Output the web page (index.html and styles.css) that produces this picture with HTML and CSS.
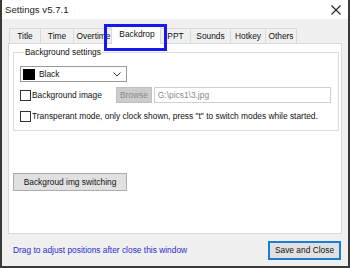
FILE: index.html
```html
<!DOCTYPE html>
<html>
<head>
<meta charset="utf-8">
<link rel="stylesheet" href="styles.css">
</head>
<body>
<div class="window">
  <div class="titlebar">
    <span class="title">Settings v5.7.1</span>
    <svg class="close" width="10" height="10" viewBox="0 0 10 10"><path d="M0.5 0.5L9.5 9.5M9.5 0.5L0.5 9.5" stroke="#222" stroke-width="1.1" fill="none"/></svg>
  </div>
  <div class="content">
    <div class="tabs">
      <div class="tab t-title">Title</div>
      <div class="tab t-time">Time</div>
      <div class="tab t-over">Overtime</div>
      <div class="tab active t-back">Backdrop</div>
      <div class="tab t-ppt">PPT</div>
      <div class="tab t-sounds">Sounds</div>
      <div class="tab t-hotkey">Hotkey</div>
      <div class="tab t-others">Others</div>
    </div>
    <div class="panel">
      <fieldset class="group">
        <legend>Background settings</legend>
        <div class="select">
          <span class="swatch"></span>
          <span class="select-text">Black</span>
          <svg class="chev" width="8" height="5" viewBox="0 0 8 5"><path d="M0.5 0.5L4 4L7.5 0.5" stroke="#333" stroke-width="1" fill="none"/></svg>
        </div>
        <div class="row">
          <span class="check"></span>
          <span class="label">Background image</span>
          <span class="btn disabled">Browse</span>
          <span class="input">G:\pics1\3.jpg</span>
        </div>
        <div class="row">
          <span class="check"></span>
          <span class="label">Transperant mode, only clock shown, press "t" to switch modes while started.</span>
        </div>
      </fieldset>
      <span class="btn switch">Backgroud img switching</span>
    </div>
    <div class="footer">
      <span class="link">Drag to adjust positions after close this window</span>
      <span class="btn save">Save and Close</span>
    </div>
  </div>
  <div class="highlight"></div>
</div>
</body>
</html>
```
FILE: styles.css
```css
html, body {
  margin: 0;
  padding: 0;
  background: #ffffff;
}
.window {
  position: relative;
  width: 350px;
  height: 268px;
  box-sizing: border-box;
  border-left: 2px solid #3a3a3a;
  border-right: 2px solid #3a3a3a;
  border-bottom: 2px solid #3a3a3a;
  background: #f0f0f0;
  display: flex;
  flex-direction: column;
  font-family: "Liberation Sans", Arial, sans-serif;
  font-size: 8.4px;
  color: #111;
}
.titlebar {
  height: 19px;
  background: #ffffff;
  display: flex;
  align-items: center;
  justify-content: space-between;
  padding: 0 7px 0 3px;
  flex-shrink: 0;
}
.title {
  font-size: 9.6px;
  color: #222;
}
.close {
  display: block;
}
.content {
  flex: 1;
  display: flex;
  flex-direction: column;
  padding: 5px 6px 0 6px;
}
.tabs {
  display: flex;
  height: 19px;
  align-items: flex-end;
  padding-left: 1px;
  position: relative;
  z-index: 1;
}
.tab {
  height: 15px;
  line-height: 15px;
  text-align: center;
  border: 1px solid #d9d9d9;
  border-bottom: none;
  margin-right: -1px;
  background: #f0f0f0;
  box-sizing: border-box;
  white-space: nowrap;
}
.t-title { width: 32px; }
.t-time { width: 34px; }
.t-over { width: 41px; }
.t-back { width: 50px; padding-left: 2px; }
.t-ppt { width: 31px; }
.t-sounds { width: 41px; }
.t-hotkey { width: 36px; }
.t-others { width: 32px; }
.tab.active {
  height: 19px;
  line-height: 16px;
  background: #ffffff;
  margin: 0 -1px -1px -2px;
  position: relative;
  z-index: 2;
}
.panel {
  height: 191px;
  background: #ffffff;
  border: 1px solid #d9d9d9;
  box-sizing: border-box;
  padding: 3px 2px 0 4px;
  display: flex;
  flex-direction: column;
  align-items: flex-start;
}
.group {
  align-self: stretch;
  margin: 0;
  padding: 9px 6px 6px 6px;
  border: 1px solid #dcdcdc;
  display: flex;
  flex-direction: column;
  gap: 5px;
  min-width: 0;
}
.group legend {
  padding: 0 1px;
  margin-left: 4px;
  color: #111;
}
.select {
  width: 107px;
  height: 16px;
  box-sizing: border-box;
  border: 1px solid #9a9a9a;
  display: flex;
  align-items: center;
  padding: 0 5px 0 2px;
}
.swatch {
  width: 12px;
  height: 11px;
  background: #000;
  margin-right: 4px;
}
.select-text {
  flex: 1;
}
.chev {
  display: block;
}
.row {
  display: flex;
  align-items: center;
  height: 16px;
}
.check {
  width: 11px;
  height: 11px;
  box-sizing: border-box;
  border: 1px solid #333;
  background: #fff;
  margin-right: 1px;
  flex-shrink: 0;
}
.label {
  white-space: nowrap;
}
.btn {
  display: inline-flex;
  align-items: center;
  justify-content: center;
  box-sizing: border-box;
  background: #e1e1e1;
  border: 1px solid #adadad;
  color: #111;
  white-space: nowrap;
}
.btn.disabled {
  width: 36px;
  height: 16px;
  margin-left: 14px;
  background: #cccccc;
  border-color: #bfbfbf;
  color: #8a8a8a;
}
.input {
  height: 16px;
  box-sizing: border-box;
  flex: 1;
  margin-left: 2px;
  margin-right: 1px;
  border: 1px solid #cfcfcf;
  background: #fff;
  color: #8a8a8a;
  display: flex;
  align-items: center;
  padding-left: 3px;
}
.switch {
  width: 114px;
  height: 18px;
  margin-top: 42px;
  margin-left: 0;
}
.footer {
  flex: 1;
  display: flex;
  align-items: center;
  justify-content: space-between;
  padding: 0 1px 1px 5px;
}
.link {
  color: #2a2ad0;
  margin-top: 1px;
}
.save {
  width: 73px;
  height: 19px;
  border: 2px solid #1a7fd4;
  margin-top: 1px;
}
.highlight {
  position: absolute;
  left: 102px;
  top: 24px;
  width: 63px;
  height: 27px;
  box-sizing: border-box;
  border: 3px solid #1717ee;
  z-index: 5;
}
```
